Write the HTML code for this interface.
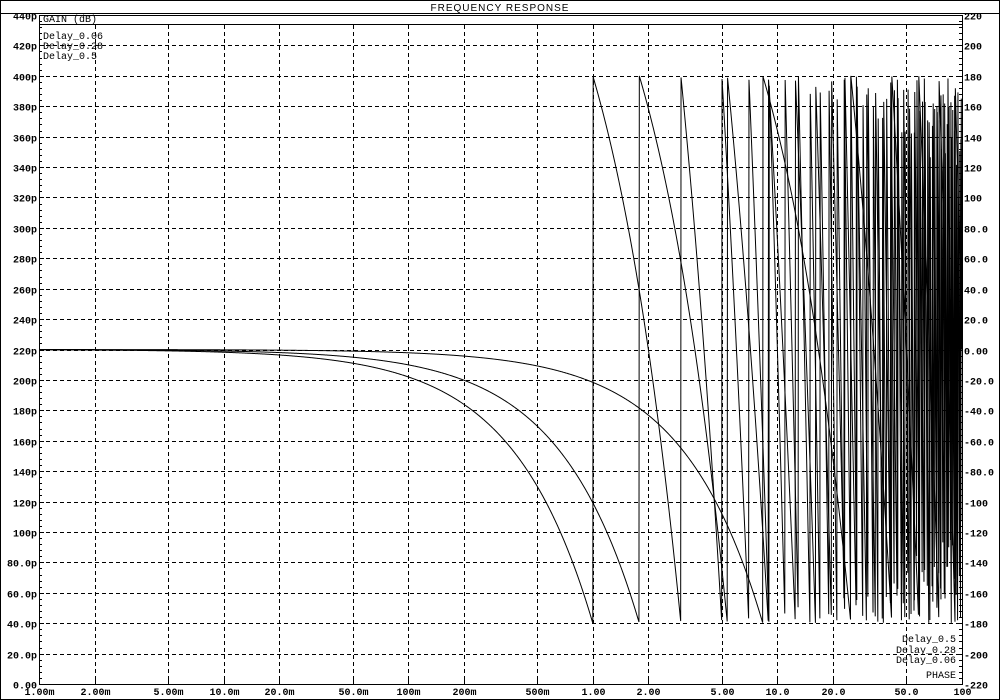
<!DOCTYPE html>
<html><head><meta charset="utf-8"><style>
html,body{margin:0;padding:0;background:#fff;width:1000px;height:700px;overflow:hidden}
svg{display:block}
text{font-family:"Liberation Mono",monospace;font-size:10px;fill:#000;font-weight:bold}
</style></head><body>
<svg id="s" width="1000" height="700" xmlns="http://www.w3.org/2000/svg">
<rect x="0.5" y="0.5" width="999" height="699" fill="#fff" stroke="#000"/>
<line x1="0" y1="13.5" x2="1000" y2="13.5" stroke="#000"/>
<text x="500" y="11" text-anchor="middle" style="font-family:'Liberation Sans',sans-serif;font-size:10px;font-weight:normal;letter-spacing:1px">FREQUENCY RESPONSE</text>
<g id="grid"></g>
<g id="curves" fill="none" stroke="#000" stroke-width="1"></g>
<line x1="39.5" y1="24.5" x2="962" y2="24.5" stroke="#000"/>
<rect x="39.5" y="15.5" width="923" height="669" fill="none" stroke="#000"/>
<text x="43" y="22" style="font-weight:normal">GAIN (dB)</text>
<text x="43" y="39" style="font-weight:normal">Delay_0.06</text>
<text x="43" y="49" style="font-weight:normal">Delay_0.28</text>
<text x="43" y="59" style="font-weight:normal">Delay_0.5</text>
<text x="956" y="642" text-anchor="end" style="font-weight:normal">Delay_0.5</text>
<text x="956" y="653" text-anchor="end" style="font-weight:normal">Delay_0.28</text>
<text x="956" y="663" text-anchor="end" style="font-weight:normal">Delay_0.06</text>
<text x="956" y="678" text-anchor="end" style="font-weight:normal">PHASE</text>
</svg>
<script>
var NS="http://www.w3.org/2000/svg";
var g=document.getElementById('grid'),c=document.getElementById('curves');
function el(t,a,p){var e=document.createElementNS(NS,t);for(var k in a)e.setAttribute(k,a[k]);(p||g).appendChild(e);return e;}
var X0=39,DEC=923/5,Y0=684,YP=669/22;
function fx(f){return X0+Math.log10(f/0.001)*DEC;}
var ll=['0.00','20.0p','40.0p','60.0p','80.0p','100p','120p','140p','160p','180p','200p','220p','240p','260p','280p','300p','320p','340p','360p','380p','400p','420p','440p'];
var rl=['-220','-200','-180','-160','-140','-120','-100','-80.0','-60.0','-40.0','-20.0','0.00','20.0','40.0','60.0','80.0','100','120','140','160','180','200','220'];
for(var i=0;i<=22;i++){var y=Math.round(Y0-i*YP)+0.5;
 if(i>0&&i<22)el('line',{x1:39,y1:y,x2:962,y2:y,stroke:'#000','stroke-dasharray':'4,3'});
 el('line',{x1:39,y1:y,x2:44,y2:y,stroke:'#000'});el('line',{x1:957,y1:y,x2:962,y2:y,stroke:'#000'});
 var t=el('text',{x:37,y:y+4,'text-anchor':'end'});t.textContent=ll[i];
 t=el('text',{x:964,y:y+4});t.textContent=rl[i];
 if(i<22)for(var j=1;j<5;j++){var yy=Math.round(Y0-(i+j/5)*YP)+0.5;el('line',{x1:39,y1:yy,x2:42,y2:yy,stroke:'#000'});el('line',{x1:959,y1:yy,x2:962,y2:yy,stroke:'#000'});}
}
var xs=[[0.001,'1.00m'],[0.002,'2.00m'],[0.005,'5.00m'],[0.01,'10.0m'],[0.02,'20.0m'],[0.05,'50.0m'],[0.1,'100m'],[0.2,'200m'],[0.5,'500m'],[1,'1.00'],[2,'2.00'],[5,'5.00'],[10,'10.0'],[20,'20.0'],[50,'50.0'],[100,'100']];
xs.forEach(function(a,k){var x=Math.round(fx(a[0]))+0.5;
 if(k>0&&k<15)el('line',{x1:x,y1:25,x2:x,y2:684,stroke:'#000','stroke-dasharray':'4,3'});
 el('line',{x1:x,y1:678,x2:x,y2:684,stroke:'#000'});
 var t=el('text',{x:x,y:695,'text-anchor':'middle'});t.textContent=a[1];});
function py(p){return Y0-(p+220)/440*669;}
[0.5,0.28,0.06].forEach(function(d){
 var pts=[],N=2500;
 for(var n=0;n<=N;n++){var f=0.001*Math.pow(10,5*n/N);var ph=-360*f*d;
  var w=((ph+180)%360+360)%360-180; if(ph>-180)w=ph;
  pts.push(fx(f).toFixed(2)+','+py(w).toFixed(2));}
 el('polyline',{points:pts.join(' ')},c);
});
</script>
</body></html>
